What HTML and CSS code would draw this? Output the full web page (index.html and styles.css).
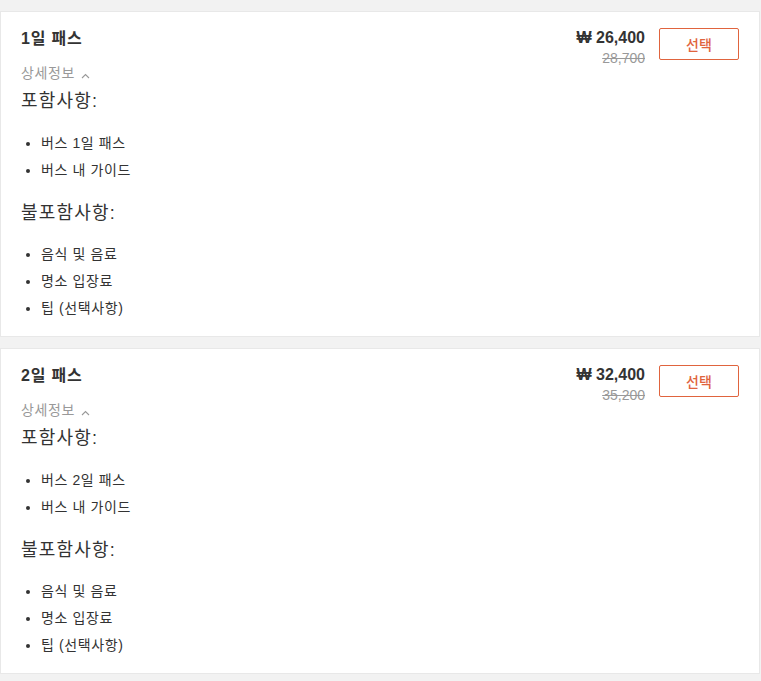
FILE: index.html
```html
<!DOCTYPE html>
<html lang="ko">
<head>
<meta charset="utf-8">
<link rel="stylesheet" href="styles.css">
</head>
<body>
<div class="list">
  <div class="card">
    <div class="head">
      <div class="info">
        <div class="title">1일 패스</div>
        <div class="detail">상세정보 <svg class="caret" width="9" height="6" viewBox="0 0 9 6"><polyline points="1,5 4.5,1.5 8,5" fill="none" stroke="#999" stroke-width="1.1"/></svg></div>
      </div>
      <div class="buy">
        <div class="price">
          <div class="now">₩ 26,400</div>
          <div class="was">28,700</div>
        </div>
        <button class="select">선택</button>
      </div>
    </div>
    <div class="body">
      <h3>포함사항:</h3>
      <ul class="inc">
        <li>버스 1일 패스</li>
        <li>버스 내 가이드</li>
      </ul>
      <h3>불포함사항:</h3>
      <ul class="exc">
        <li>음식 및 음료</li>
        <li>명소 입장료</li>
        <li>팁 (선택사항)</li>
      </ul>
    </div>
  </div>
  <div class="card">
    <div class="head">
      <div class="info">
        <div class="title">2일 패스</div>
        <div class="detail">상세정보 <svg class="caret" width="9" height="6" viewBox="0 0 9 6"><polyline points="1,5 4.5,1.5 8,5" fill="none" stroke="#999" stroke-width="1.1"/></svg></div>
      </div>
      <div class="buy">
        <div class="price">
          <div class="now">₩ 32,400</div>
          <div class="was">35,200</div>
        </div>
        <button class="select">선택</button>
      </div>
    </div>
    <div class="body">
      <h3>포함사항:</h3>
      <ul class="inc">
        <li>버스 2일 패스</li>
        <li>버스 내 가이드</li>
      </ul>
      <h3>불포함사항:</h3>
      <ul class="exc">
        <li>음식 및 음료</li>
        <li>명소 입장료</li>
        <li>팁 (선택사항)</li>
      </ul>
    </div>
  </div>
</div>
</body>
</html>
```
FILE: styles.css
```css
html, body {
  margin: 0;
  padding: 0;
  background: #f2f2f2;
  font-family: "Liberation Sans", "Noto Sans CJK KR", sans-serif;
  color: #333;
}
.list {
  padding-top: 11px;
  width: 760px;
}
.card {
  background: #fff;
  border: 1px solid #e8e8e8;
  margin-bottom: 11px;
  padding: 16px 20px 14px 20px;
}
.head {
  display: flex;
  justify-content: space-between;
  align-items: flex-start;
}
.title {
  font-size: 16px;
  font-weight: bold;
  line-height: 22px;
  letter-spacing: 0.8px;
}
.detail {
  margin-top: 13px;
  font-size: 14px;
  line-height: 20px;
  letter-spacing: 0.6px;
  color: #999;
  display: flex;
  align-items: center;
  gap: 6px;
}
.caret {
  margin-top: 6px;
}
.buy {
  display: flex;
  align-items: flex-start;
  gap: 14px;
}
.price {
  text-align: right;
}
.now {
  font-size: 16px;
  font-weight: bold;
  line-height: 20px;
  color: #333;
}
.was {
  font-size: 14px;
  line-height: 20px;
  color: #999;
  text-decoration: line-through;
}
.select {
  width: 80px;
  height: 32px;
  background: #fff;
  border: 1px solid #e0643e;
  border-radius: 2px;
  color: #e0643e;
  font-family: inherit;
  font-size: 14px;
  font-weight: 500;
  padding: 0;
}
.body h3 {
  margin: 5px 0 0 0;
  font-size: 18px;
  font-weight: normal;
  line-height: 26px;
  letter-spacing: 1.2px;
  color: #333;
}
.body ul {
  padding-left: 20px;
  list-style: disc;
}
.body ul.inc {
  margin: 16px 0 16px 0;
}
.body ul.exc {
  margin: 15px 0 0 0;
}
.body ul + h3 {
  margin-top: 0;
}
.body li {
  font-size: 14px;
  line-height: 27px;
  letter-spacing: 0.6px;
  color: #333;
}
```
